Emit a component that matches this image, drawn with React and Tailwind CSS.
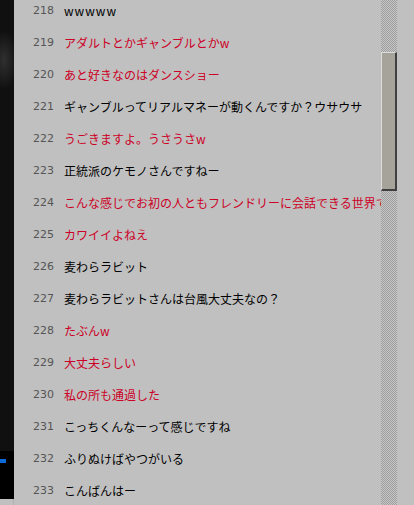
const rows = [
  { n: 218, t: "wwwww", red: false },
  { n: 219, t: "アダルトとかギャンブルとかw", red: true },
  { n: 220, t: "あと好きなのはダンスショー", red: true },
  { n: 221, t: "ギャンブルってリアルマネーが動くんですか？ウサウサ", red: false },
  { n: 222, t: "うごきますよ。うさうさw", red: true },
  { n: 223, t: "正統派のケモノさんですねー", red: false },
  { n: 224, t: "こんな感じでお初の人ともフレンドリーに会話できる世界です", red: true },
  { n: 225, t: "カワイイよねえ", red: true },
  { n: 226, t: "麦わらラビット", red: false },
  { n: 227, t: "麦わらラビットさんは台風大丈夫なの？", red: false },
  { n: 228, t: "たぶんw", red: true },
  { n: 229, t: "大丈夫らしい", red: true },
  { n: 230, t: "私の所も通過した", red: true },
  { n: 231, t: "こっちくんなーって感じですね", red: false },
  { n: 232, t: "ふりぬけばやつがいる", red: false },
  { n: 233, t: "こんばんはー", red: false },
];

export default function App() {
  return (
    <div className="flex h-[505px] w-[414px] overflow-hidden bg-[#c0c0c0]">
      {/* left dark strip */}
      <div className="flex w-[14px] shrink-0 flex-col">
        <div className="h-[451px] bg-[radial-gradient(ellipse_14px_30px_at_4px_60px,#303030,#101010)]" />
        <div className="flex h-[48px] flex-col bg-black pt-[8px]">
          <div className="h-[4px] w-[6px] bg-[#0a6ad8]" />
        </div>
        <div className="flex-1 border-r border-[#b0b0b0] bg-[#c0c0c0]" />
      </div>

      {/* chat log */}
      <div className="min-w-0 flex-1 overflow-hidden">
        <div className="-mt-[5px] flex flex-col">
          {rows.map((r) => (
            <div key={r.n} className="flex h-[32px] items-center whitespace-nowrap">
              <span className="w-[19px] shrink-0" />
              <span className="w-[20px] shrink-0 text-right font-['DejaVu_Sans',sans-serif] text-[11px] text-[#555]">
                {r.n}
              </span>
              <span
                className={`ml-[11px] font-['Noto_Sans_CJK_JP',sans-serif] text-[12px] ${
                  r.red ? "text-[#cc0026]" : "text-black"
                } ${r.n === 218 ? "tracking-[1px]" : ""}`}
              >
                {r.t}
              </span>
            </div>
          ))}
        </div>
      </div>

      {/* scrollbar */}
      <div className="w-[16px] shrink-0 bg-[repeating-conic-gradient(#9e9e9e_0_25%,#c6c6c6_0_50%)] bg-size-[2px_2px] pt-[52px]">
        <div className="h-[139px] border-t border-l border-t-[#dcdcdc] border-l-[#dcdcdc] border-r-2 border-b-2 border-r-[#404040] border-b-[#404040] bg-[#a6a39b]" />
      </div>
      <div className="w-[17px] shrink-0 bg-[#c0c0c0]" />
    </div>
  );
}
